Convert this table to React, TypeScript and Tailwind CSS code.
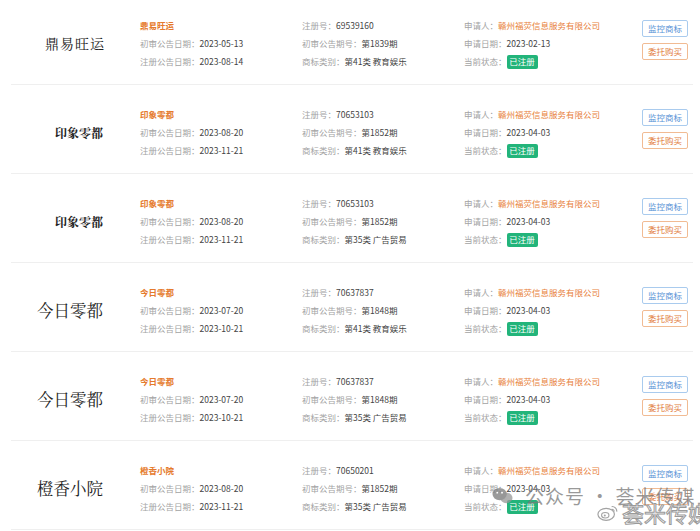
import React from "react";

type Row = {
  brand: string;
  brandCls: string;
  name: string;
  first: string;
  reg: string;
  no: string;
  issue: string;
  cls: string;
  apply: string;
};

const rows: Row[] = [
  { brand: "鼎易旺运", brandCls: "pl-[34px] text-[14px] tracking-[1px]", name: "鼎易旺运", first: "2023-05-13", reg: "2023-08-14", no: "69539160", issue: "第1839期", cls: "第41类 教育娱乐", apply: "2023-02-13" },
  { brand: "印象零都", brandCls: "pl-[44px] text-[12px] font-bold", name: "印象零都", first: "2023-08-20", reg: "2023-11-21", no: "70653103", issue: "第1852期", cls: "第41类 教育娱乐", apply: "2023-04-03" },
  { brand: "印象零都", brandCls: "pl-[44px] text-[12px] font-bold", name: "印象零都", first: "2023-08-20", reg: "2023-11-21", no: "70653103", issue: "第1852期", cls: "第35类 广告贸易", apply: "2023-04-03" },
  { brand: "今日零都", brandCls: "pl-[26px] text-[16.5px]", name: "今日零都", first: "2023-07-20", reg: "2023-10-21", no: "70637837", issue: "第1848期", cls: "第41类 教育娱乐", apply: "2023-04-03" },
  { brand: "今日零都", brandCls: "pl-[26px] text-[16.5px]", name: "今日零都", first: "2023-07-20", reg: "2023-10-21", no: "70637837", issue: "第1848期", cls: "第35类 广告贸易", apply: "2023-04-03" },
  { brand: "橙香小院", brandCls: "pl-[26px] text-[16.5px]", name: "橙香小院", first: "2023-08-20", reg: "2023-11-21", no: "70650201", issue: "第1852期", cls: "第35类 广告贸易", apply: "2023-04-03" },
];

function Field({ label, value }: { label: string; value: React.ReactNode }) {
  return (
    <div className="flex items-center h-[18px] whitespace-nowrap">
      <span className="text-[#a3a3a3]">{label}</span>
      <span className="text-[#444]">{value}</span>
    </div>
  );
}

export default function App() {
  return (
    <div
      className="relative w-[700px] h-[531px] overflow-hidden bg-white text-[8.5px]"
      style={{ fontFamily: '"Noto Sans CJK SC", "Noto Sans", sans-serif' }}
    >
      <div className="mt-[-4px] ml-[11px] w-[682px]">
        {rows.map((r, i) => (
          <div key={i} className="flex items-center h-[89px] pt-[7px] border-b border-[#efefef]">
            <div className={`w-[129px] text-[#222] ${r.brandCls}`} style={{ fontFamily: '"Noto Serif CJK SC", "Noto Sans CJK SC", serif' }}>
              {r.brand}
            </div>
            <div className="w-[162px] flex flex-col">
              <div className="h-[18px] flex items-center text-[#e57a2c] font-bold">{r.name}</div>
              <Field label="初审公告日期：" value={r.first} />
              <Field label="注册公告日期：" value={r.reg} />
            </div>
            <div className="w-[162px] flex flex-col">
              <Field label="注册号：" value={r.no} />
              <Field label="初审公告期号：" value={r.issue} />
              <Field label="商标类别：" value={r.cls} />
            </div>
            <div className="w-[178px] flex flex-col">
              <div className="flex items-center h-[18px] whitespace-nowrap">
                <span className="text-[#a3a3a3]">申请人：</span>
                <span className="text-[#e8823c]">赣州福荧信息服务有限公司</span>
              </div>
              <Field label="申请日期：" value={r.apply} />
              <div className="flex items-center h-[18px] whitespace-nowrap">
                <span className="text-[#a3a3a3]">当前状态：</span>
                <span className="bg-[#22b47a] text-white rounded-[2px] w-[31px] h-[14px] flex items-center justify-center">已注册</span>
              </div>
            </div>
            <div className="flex flex-col gap-[6px] mt-[-7px]">
              <div className="w-[46px] h-[17px] border border-[#a9cbee] rounded-[2px] text-[#5b93d6] flex items-center justify-center">监控商标</div>
              <div className="w-[46px] h-[17px] border border-[#f1bb93] rounded-[2px] text-[#e27e3e] flex items-center justify-center">委托购买</div>
            </div>
          </div>
        ))}
      </div>

      {/* watermark overlay */}
      <div className="absolute left-[492px] top-[486px] flex items-center gap-[12px] text-[rgba(120,120,120,0.75)]">
        <svg width="21" height="18" viewBox="0 0 22 18">
          <ellipse cx="8" cy="7" rx="7.5" ry="6.5" fill="rgba(120,120,120,0.75)" />
          <ellipse cx="15" cy="11" rx="6.5" ry="5.5" fill="rgba(150,150,150,0.75)" />
          <circle cx="5.5" cy="5.5" r="1" fill="#fff" />
          <circle cx="10.5" cy="5.5" r="1" fill="#fff" />
        </svg>
        <span className="text-[19px] leading-none tracking-[1px] whitespace-nowrap">公众号 · 荟米传媒</span>
      </div>
      <div className="absolute left-[597px] top-[501px] flex items-center gap-[3px] whitespace-nowrap">
        <svg width="22" height="19" viewBox="0 0 24 20">
          <ellipse cx="10" cy="12" rx="9" ry="6.5" fill="none" stroke="rgba(140,140,140,0.8)" strokeWidth="1.3" />
          <ellipse cx="9" cy="13" rx="4" ry="3" fill="none" stroke="rgba(140,140,140,0.8)" strokeWidth="1.2" />
          <circle cx="8.5" cy="13.3" r="1.1" fill="rgba(140,140,140,0.8)" />
          <path d="M16 3.5 A5 5 0 0 1 21.5 9" fill="none" stroke="rgba(140,140,140,0.8)" strokeWidth="1.3" />
          <path d="M16 6.5 A2.5 2.5 0 0 1 18.8 9" fill="none" stroke="rgba(140,140,140,0.8)" strokeWidth="1.2" />
        </svg>
        <span className="text-[22px] leading-none text-white [-webkit-text-stroke:1px_#9a9a9a]">荟米传媒</span>
      </div>
    </div>
  );
}
